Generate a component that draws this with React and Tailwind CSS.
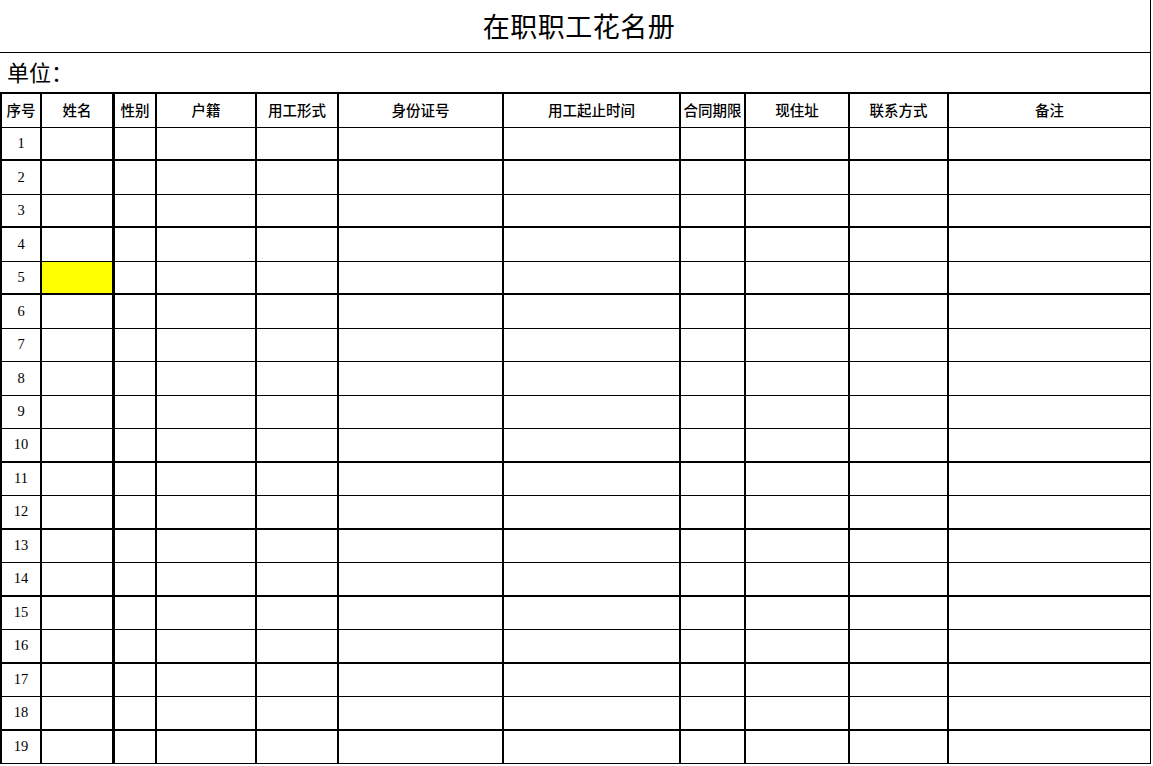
import React from 'react';

const headers = ['序号', '姓名', '性别', '户籍', '用工形式', '身份证号', '用工起止时间', '合同期限', '现住址', '联系方式', '备注'];

// 粗线所在的行（行底线）
const thickRows = [1, 3, 5, 10, 12, 14, 16, 18];

const cellBorder = (ci) => {
    if (ci === 1) return 'border-r-[3px]';
    if (ci === 10) return 'border-r';
    return 'border-r-2';
};

const App = () => {
    const rows = Array.from({ length: 19 }, (_, i) => i + 1);

    return (
        <div className="w-[1153px] h-[766px] bg-white overflow-hidden text-black" style={{ fontFamily: '"Liberation Serif", "Noto Sans CJK SC", serif' }}>
            {/* 标题 */}
            <div className="w-[1151px] h-[53px] flex items-center justify-center border-b border-r border-black pl-[8px] pt-[4px]">
                <h1 className="text-[27px] leading-none tracking-[0.5px]">在职职工花名册</h1>
            </div>

            {/* 单位 */}
            <div className="w-[1151px] h-[39px] flex items-center pl-[7px] pt-[2px] border-r border-black">
                <span className="text-[22px] leading-none">单位：</span>
            </div>

            {/* 表格 */}
            <div className="grid grid-cols-[42px_73px_42px_100px_82px_165px_177px_65px_104px_99px_202px] w-[1151px] border-t-2 border-black">
                {headers.map((h, ci) => (
                    <div
                        key={h}
                        className={`h-[34px] flex items-center justify-center pt-[2px] border-b border-black text-[14.5px] font-medium whitespace-nowrap ${cellBorder(ci)} ${ci === 0 ? 'border-l-2' : ''}`}
                    >
                        {h}
                    </div>
                ))}
                {rows.map((r) => {
                    const h = r % 2 === 1 ? 'h-[33px]' : 'h-[34px]';
                    const b = thickRows.includes(r) ? 'border-b-2' : 'border-b';
                    return headers.map((_, ci) => (
                        <div
                            key={`${r}-${ci}`}
                            className={`${h} ${b} border-black ${cellBorder(ci)} ${ci === 0 ? 'border-l-2' : ''} flex items-center justify-center ${r === 5 && ci === 1 ? 'bg-[#ffff00]' : ''}`}
                        >
                            {ci === 0 && <span className="text-[14.5px]">{r}</span>}
                        </div>
                    ));
                })}
            </div>
        </div>
    );
};

export default App;
